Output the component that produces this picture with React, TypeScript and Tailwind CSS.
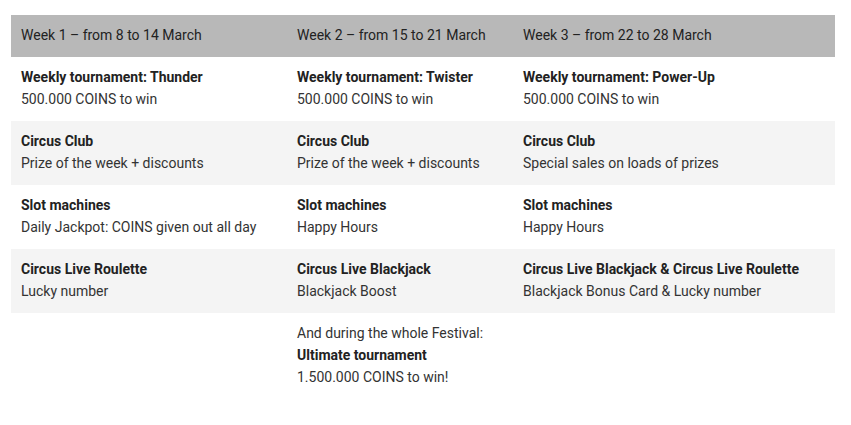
const HEAD = [
  "Week 1 – from 8 to 14 March",
  "Week 2 – from 15 to 21 March",
  "Week 3 – from 22 to 28 March",
];

const ROWS: { title: string; text: string }[][] = [
  [
    { title: "Weekly tournament: Thunder", text: "500.000 COINS to win" },
    { title: "Weekly tournament: Twister", text: "500.000 COINS to win" },
    { title: "Weekly tournament: Power-Up", text: "500.000 COINS to win" },
  ],
  [
    { title: "Circus Club", text: "Prize of the week + discounts" },
    { title: "Circus Club", text: "Prize of the week + discounts" },
    { title: "Circus Club", text: "Special sales on loads of prizes" },
  ],
  [
    { title: "Slot machines", text: "Daily Jackpot: COINS given out all day" },
    { title: "Slot machines", text: "Happy Hours" },
    { title: "Slot machines", text: "Happy Hours" },
  ],
  [
    { title: "Circus Live Roulette", text: "Lucky number" },
    { title: "Circus Live Blackjack", text: "Blackjack Boost" },
    { title: "Circus Live Blackjack & Circus Live Roulette", text: "Blackjack Bonus Card & Lucky number" },
  ],
];

export default function App() {
  return (
    <div className="w-[851px] h-[425px] bg-white pt-[15px] pl-[11px] text-[14px] leading-[22px] text-[#333]" style={{ fontFamily: "Roboto, 'Liberation Sans', sans-serif" }}>
      <div className="w-[824px] grid grid-cols-[276px_226px_322px]">
        {HEAD.map((h) => (
          <div key={h} className="bg-[#b8b8b8] h-[42px] flex items-center px-[10px] pb-[2px] text-[#222]">
            {h}
          </div>
        ))}
        {ROWS.map((row, i) =>
          row.map((c, j) => (
            <div
              key={`${i}-${j}`}
              className={`h-[64px] px-[10px] pt-[9px] ${i % 2 === 1 ? "bg-[#f4f4f4]" : "bg-white"}`}
            >
              <div className="font-bold text-[#222]">{c.title}</div>
              <div>{c.text}</div>
            </div>
          ))
        )}
        <div />
        <div className="px-[10px] pt-[9px]">
          <div>And during the whole Festival:</div>
          <div className="font-bold text-[#222]">Ultimate tournament</div>
          <div>1.500.000 COINS to win!</div>
        </div>
        <div />
      </div>
    </div>
  );
}
